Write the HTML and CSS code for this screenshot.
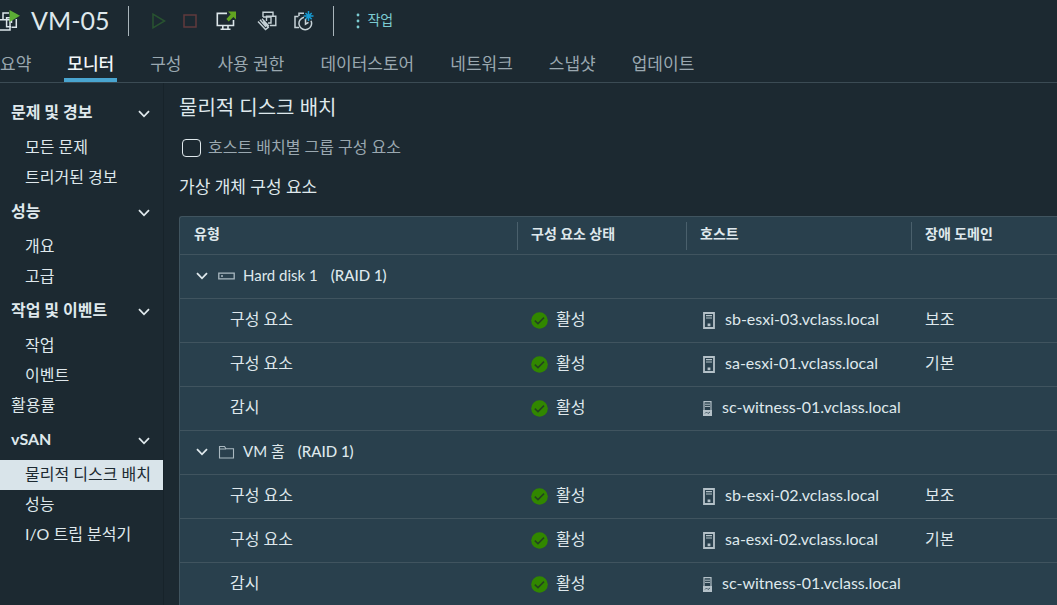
FILE: index.html
```html
<!DOCTYPE html>
<html lang="ko">
<head>
<meta charset="utf-8">
<title>VM-05</title>
<link rel="stylesheet" href="styles.css">
</head>
<body>
<svg class="defs" aria-hidden="true">
  <symbol id="chevron" viewBox="0 0 12 8"><path d="M1 1.2 6 6.3 11 1.2" fill="none" stroke="currentColor" stroke-width="1.8"/></symbol>
  <symbol id="check" viewBox="0 0 17 17"><circle cx="8.5" cy="8.5" r="8.3" fill="#318700"/><path d="M3.8 8.6 7 11.6 13 5.6" fill="none" stroke="#23431f" stroke-width="1.5"/></symbol>
  <symbol id="host" viewBox="0 0 12 17"><path d="M1 1H11V16H1Z" fill="none" stroke="currentColor" stroke-width="1.8"/><path d="M3 3.7H9M3 6H9" stroke="currentColor" stroke-width="1.2"/><path d="M4.6 11.5H7.4V14.2H4.6Z" fill="currentColor"/></symbol>
  <symbol id="witness" viewBox="0 0 9 15"><path d="M1 .7H8V14.3H1Z" fill="none" stroke="currentColor" stroke-width="1.2"/><path d="M2 3.2H7M2 5.4H7" stroke="currentColor"/><path d="M0 9H9V15H0Z" fill="currentColor"/><path d="M2 12.5 3.5 11 5 12.5 7 11" fill="none" stroke="#29404d" stroke-width=".8"/></symbol>
</svg>

<header class="toolbar">
  <svg class="vm-icon" viewBox="0 0 20 22" aria-hidden="true"><g fill="none" stroke="#dce6ea" stroke-width="1.5"><path d="M3 9.5V3H9M16.3 9V17.3H11.5M6.6 14V7.8H11"/><path d="M0 9.8H10V20H0"/><path d="M6.6 14V16.7H11M11.5 9V13"/></g><path d="M9.5 0 20 5.7 9.5 12Z" fill="#5cad35"/></svg>
  <h1 class="vm-name">VM-05</h1>
  <span class="divider"></span>
  <button class="tool play" aria-label="전원 켜기"><svg width="14" height="16" viewBox="0 0 14 16"><path d="M1 1.2 12.5 8 1 14.8Z" fill="none" stroke="#285330" stroke-width="1.5"/></svg></button>
  <button class="tool stop" aria-label="전원 끄기"><svg width="14" height="14" viewBox="0 0 14 14"><path d="M1 1H13V13H1Z" fill="none" stroke="#603a3d" stroke-width="1.5"/></svg></button>
  <button class="tool console" aria-label="콘솔 시작"><svg width="21" height="20" viewBox="0 0 21 20"><path d="M11 2.4H1.3V14.5H17.5V9M6.8 15V18M12 15V18M4.5 18.2H14.5" fill="none" stroke="#dce6ea" stroke-width="1.6"/><path d="M12 .5H20V8.5L17.4 6 12.7 10.4 10.4 8 14.7 3.3Z" fill="#62a420"/></svg></button>
  <button class="tool migrate" aria-label="마이그레이션"><svg width="20" height="20" viewBox="0 0 20 20"><g fill="none" stroke="#c6d2d7" stroke-width="1.4"><path d="M6 6V1.2H16V5M9.5 10V5.2H18.8V14.5H13"/><path d="M6 6H14V12H11"/><path d="m1 10.5 7.5 8 2.8-2.2-5-6M3 8.8l6 7M5 7.7l7 7.6"/></g></svg></button>
  <button class="tool snapshot" aria-label="스냅샷 생성"><svg width="20" height="20" viewBox="0 0 20 20"><g fill="none" stroke="#c6d2d7" stroke-width="1.5"><path d="M4.5 5.5H1V16.5H5M5 5V2.2H10"/><path d="M10 6.2A6.3 6.3 0 1 0 17 9.7M11.5 8V13.2L14.5 11.3"/></g><path d="M14.5 0V10M9.7 5H19.5M11.5 2 17.7 8.2M17.7 2 11.5 8.2" stroke="#179bd3" stroke-width="1.5"/></svg></button>
  <span class="divider"></span>
  <button class="actions"><svg width="4" height="16" viewBox="0 0 4 16" fill="currentColor"><circle cx="2" cy="2" r="1.4"/><circle cx="2" cy="8" r="1.4"/><circle cx="2" cy="14" r="1.4"/></svg><span>작업</span></button>
</header>

<nav class="tabs">
  <a href="#">요약</a>
  <a href="#" class="current" aria-current="page">모니터</a>
  <a href="#">구성</a>
  <a href="#">사용 권한</a>
  <a href="#">데이터스토어</a>
  <a href="#">네트워크</a>
  <a href="#">스냅샷</a>
  <a href="#">업데이트</a>
</nav>

<div class="body">
  <nav class="side">
    <button class="group">문제 및 경보<svg class="chev"><use href="#chevron"/></svg></button>
    <a class="item" href="#">모든 문제</a>
    <a class="item" href="#">트리거된 경보</a>
    <button class="group">성능<svg class="chev"><use href="#chevron"/></svg></button>
    <a class="item" href="#">개요</a>
    <a class="item" href="#">고급</a>
    <button class="group">작업 및 이벤트<svg class="chev"><use href="#chevron"/></svg></button>
    <a class="item" href="#">작업</a>
    <a class="item" href="#">이벤트</a>
    <a class="item top" href="#">활용률</a>
    <button class="group">vSAN<svg class="chev"><use href="#chevron"/></svg></button>
    <a class="item selected" href="#" aria-current="true">물리적 디스크 배치</a>
    <a class="item" href="#">성능</a>
    <a class="item" href="#">I/O 트립 분석기</a>
  </nav>

  <main class="content">
    <h2 class="title">물리적 디스크 배치</h2>
    <label class="option"><input type="checkbox">호스트 배치별 그룹 구성 요소</label>
    <h3 class="subtitle">가상 개체 구성 요소</h3>
    <table class="grid">
      <colgroup><col class="c-type"><col class="c-state"><col class="c-host"><col></colgroup>
      <thead>
        <tr><th>유형</th><th>구성 요소 상태</th><th>호스트</th><th>장애 도메인</th></tr>
      </thead>
      <tbody>
        <tr><td colspan="4"><div class="parent"><button class="toggle" aria-label="접기"><svg class="chev"><use href="#chevron"/></svg></button><svg class="kind" viewBox="0 0 17 16"><path d="M.8 5.2H16.2V10.8H.8Z" fill="none" stroke="currentColor" stroke-width="1.3"/><path d="M3 8H5" stroke="currentColor" stroke-width="1.5"/></svg><span>Hard disk 1</span><span class="raid">(RAID 1)</span></div></td></tr>
        <tr><td class="child">구성 요소</td><td><div class="cell"><svg class="check"><use href="#check"/></svg>활성</div></td><td><div class="cell host"><svg class="server"><use href="#host"/></svg>sb-esxi-03.vclass.local</div></td><td>보조</td></tr>
        <tr><td class="child">구성 요소</td><td><div class="cell"><svg class="check"><use href="#check"/></svg>활성</div></td><td><div class="cell host"><svg class="server"><use href="#host"/></svg>sa-esxi-01.vclass.local</div></td><td>기본</td></tr>
        <tr><td class="child">감시</td><td><div class="cell"><svg class="check"><use href="#check"/></svg>활성</div></td><td><div class="cell host"><svg class="witness"><use href="#witness"/></svg>sc-witness-01.vclass.local</div></td><td></td></tr>
        <tr><td colspan="4"><div class="parent"><button class="toggle" aria-label="접기"><svg class="chev"><use href="#chevron"/></svg></button><svg class="kind" viewBox="0 0 17 16"><path d="M1.5 2.5H6.5L8 4.7H15.5V14H1.5ZM1.5 5H8" fill="none" stroke="currentColor" stroke-width="1.1"/></svg><span>VM 홈</span><span class="raid">(RAID 1)</span></div></td></tr>
        <tr><td class="child">구성 요소</td><td><div class="cell"><svg class="check"><use href="#check"/></svg>활성</div></td><td><div class="cell host"><svg class="server"><use href="#host"/></svg>sb-esxi-02.vclass.local</div></td><td>보조</td></tr>
        <tr><td class="child">구성 요소</td><td><div class="cell"><svg class="check"><use href="#check"/></svg>활성</div></td><td><div class="cell host"><svg class="server"><use href="#host"/></svg>sa-esxi-02.vclass.local</div></td><td>기본</td></tr>
        <tr><td class="child">감시</td><td><div class="cell"><svg class="check"><use href="#check"/></svg>활성</div></td><td><div class="cell host"><svg class="witness"><use href="#witness"/></svg>sc-witness-01.vclass.local</div></td><td></td></tr>
      </tbody>
    </table>
  </main>
</div>
</body>
</html>
```

FILE: styles.css
```css
* { box-sizing: border-box; }
body {
  margin: 0;
  height: 100vh;
  overflow: hidden;
  display: flex;
  flex-direction: column;
  background: #1c2931;
  color: #dfe8ec;
  font: 16px/24px Lato, "Noto Sans CJK KR", sans-serif;
}
a { color: inherit; text-decoration: none; }
button { font: inherit; color: inherit; background: none; border: 0; padding: 0; }
svg { display: block; flex: none; }
h1, h2, h3 { margin: 0; font-weight: 400; }
.defs { position: absolute; width: 0; height: 0; }
.chev { width: 12px; height: 8px; }

.toolbar { display: flex; align-items: center; height: 42px; flex: none; }
.vm-icon { width: 20px; height: 22px; }
.vm-name { margin: 0 19px 0 11px; padding-bottom: 2px; font-size: 25px; line-height: 32px; }
.divider { width: 1px; height: 30px; background: #a9b5bb; }
.play { margin-left: 23px; }
.stop { margin-left: 17px; }
.console { margin-left: 19px; }
.migrate { margin-left: 20px; }
.snapshot { margin: 0 19px 0 17px; }
.actions { display: flex; align-items: center; gap: 7px; margin-left: 22px; font-size: 14px; color: #7ccbd2; }
.actions span { padding-bottom: 3px; }

.tabs {
  display: flex;
  gap: 30px;
  height: 41px;
  flex: none;
  border-bottom: 1px solid #3b4b54;
  color: #9aa8b0;
  font-size: 17px;
  line-height: 44px;
}
.tabs a { height: 40px; padding: 0 3px; white-space: nowrap; }
.tabs a:first-child { padding-left: 0; }
.tabs .current { color: #f2f7f9; font-weight: 500; border-bottom: 4px solid #49a5d0; }

.body { display: flex; flex: 1; min-height: 0; }
.side { width: 164px; flex: none; padding-top: 11px; border-right: 1px solid #17232a; }
.group {
  display: flex;
  align-items: center;
  justify-content: space-between;
  width: 100%;
  height: 39px;
  padding: 0 13px 3px 11px;
  font-weight: 700;
}
.group .chev { margin-top: 3px; }
.item { display: flex; align-items: center; height: 30px; padding: 0 0 2px 25px; white-space: nowrap; }
.item.top { padding-left: 11px; }
.item.selected { background: #d9e4ea; color: #1c2931; }

.content { flex: 1; min-width: 0; padding: 8px 0 0 15px; }
.title { font-size: 20px; line-height: 32px; }
.option { display: flex; align-items: center; gap: 7px; height: 48px; color: #9aa8b0; }
.option input {
  appearance: none;
  width: 19px;
  height: 18px;
  margin: 2px 0 0 3px;
  border: 1px solid #dfe8ec;
  border-radius: 4px;
}
.subtitle { font-size: 17px; line-height: 32px; padding-bottom: 13px; }

.grid {
  width: 100%;
  table-layout: fixed;
  border-collapse: separate;
  border-spacing: 0;
  background: #29404d;
  border: solid #40545f;
  border-width: 1px 0 0 1px;
  border-radius: 3px 0 0 0;
}
.c-type { width: 337px; }
.c-state { width: 169px; }
.c-host { width: 225px; }
.grid th, .grid td { padding: 0 0 3px 14px; text-align: left; border-bottom: 1px solid #40545f; white-space: nowrap; }
.grid th {
  height: 38px;
  font-size: 14px;
  background: linear-gradient(#4a606c, #4a606c) left center / 1px 28px no-repeat;
}
.grid th:first-child { background: none; }
.grid td { height: 44px; }
.grid td.child { padding-left: 50px; }
.parent { display: flex; align-items: center; font-size: 15px; }
.toggle { margin: 2px 10px 0 2px; }
.kind { width: 17px; height: 16px; margin: 2px 8px 0 0; color: #aab9c1; }
.raid { margin-left: 13px; font-weight: 500; }
.cell { display: flex; align-items: center; gap: 8px; }
.cell svg { margin-top: 2px; }
.check { width: 17px; height: 17px; }
.host { gap: 10px; padding-left: 3px; }
.server { width: 12px; height: 17px; color: #b4c1c8; }
.witness { width: 9px; height: 15px; color: #b4c1c8; }
```
